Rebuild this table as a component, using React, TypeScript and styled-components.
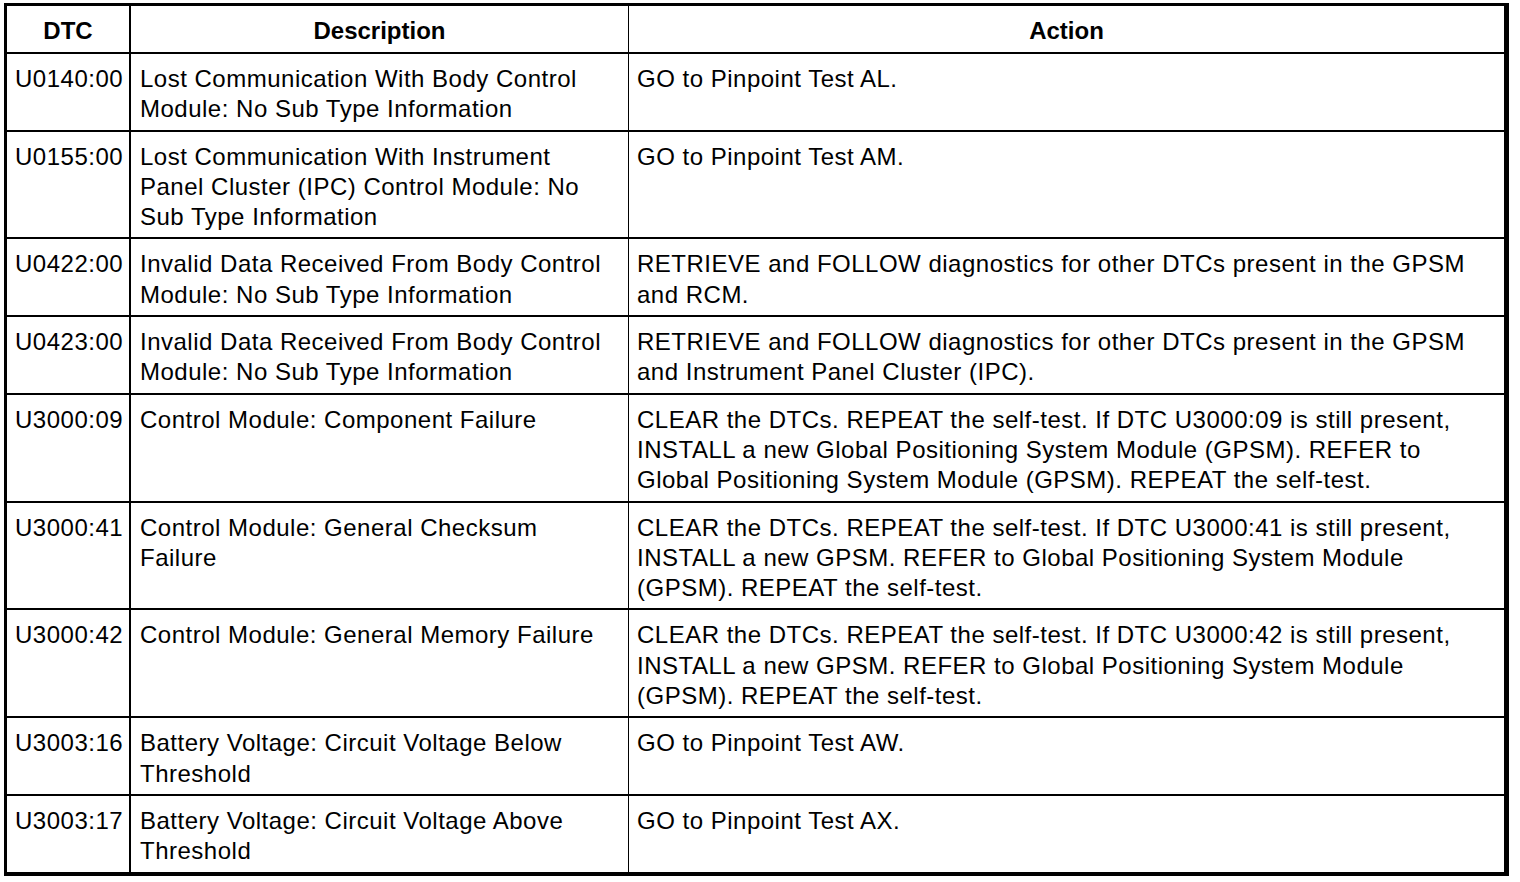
import * as React from "react";
import styled, { createGlobalStyle } from "styled-components";

const GlobalStyle = createGlobalStyle`
  html, body {
    margin: 0;
    padding: 0;
    background: #ffffff;
  }
  body {
    font-family: "Liberation Sans", Arial, sans-serif;
    color: #000000;
  }
`;

const Page = styled.div`
  padding: 3px 0 0 4px;
`;

const Table = styled.div`
  box-sizing: border-box;
  width: 1505px;
  border-style: solid;
  border-color: #000;
  border-width: 3px 5px 4px 3px;
  display: grid;
  grid-template-columns: 124px 498px 875px;
`;

const Row = styled.div<{ $last?: boolean }>`
  display: contents;

  & > div {
    border-bottom: ${(p) => (p.$last ? "none" : "2px solid #000")};
  }
`;

const Cell = styled.div<{ $col: number }>`
  box-sizing: border-box;
  padding: 10px ${(p) => (p.$col === 0 ? 4 : 20)}px 5px ${(p) => (p.$col === 1 ? 9 : 8)}px;
  font-size: 24px;
  line-height: 30.3px;
  letter-spacing: 0.5px;
  border-right: ${(p) =>
    p.$col === 0 ? "2px solid #000" : p.$col === 1 ? "1px solid #000" : "none"};
`;

const HeadCell = styled(Cell)`
  height: 48px;
  padding: 10px 4px 0;
  font-weight: bold;
  letter-spacing: 0;
  text-align: center;
`;

type Entry = {
  dtc: string;
  description: string;
  action: string;
};

const entries: Entry[] = [
  {
    dtc: "U0140:00",
    description: "Lost Communication With Body Control Module: No Sub Type Information",
    action: "GO to Pinpoint Test AL.",
  },
  {
    dtc: "U0155:00",
    description:
      "Lost Communication With Instrument Panel Cluster (IPC) Control Module: No Sub Type Information",
    action: "GO to Pinpoint Test AM.",
  },
  {
    dtc: "U0422:00",
    description: "Invalid Data Received From Body Control Module: No Sub Type Information",
    action: "RETRIEVE and FOLLOW diagnostics for other DTCs present in the GPSM and RCM.",
  },
  {
    dtc: "U0423:00",
    description: "Invalid Data Received From Body Control Module: No Sub Type Information",
    action:
      "RETRIEVE and FOLLOW diagnostics for other DTCs present in the GPSM and Instrument Panel Cluster (IPC).",
  },
  {
    dtc: "U3000:09",
    description: "Control Module: Component Failure",
    action:
      "CLEAR the DTCs. REPEAT the self-test. If DTC U3000:09 is still present, INSTALL a new Global Positioning System Module (GPSM). REFER to Global Positioning System Module (GPSM). REPEAT the self-test.",
  },
  {
    dtc: "U3000:41",
    description: "Control Module: General Checksum Failure",
    action:
      "CLEAR the DTCs. REPEAT the self-test. If DTC U3000:41 is still present, INSTALL a new GPSM. REFER to Global Positioning System Module (GPSM). REPEAT the self-test.",
  },
  {
    dtc: "U3000:42",
    description: "Control Module: General Memory Failure",
    action:
      "CLEAR the DTCs. REPEAT the self-test. If DTC U3000:42 is still present, INSTALL a new GPSM. REFER to Global Positioning System Module (GPSM). REPEAT the self-test.",
  },
  {
    dtc: "U3003:16",
    description: "Battery Voltage: Circuit Voltage Below Threshold",
    action: "GO to Pinpoint Test AW.",
  },
  {
    dtc: "U3003:17",
    description: "Battery Voltage: Circuit Voltage Above Threshold",
    action: "GO to Pinpoint Test AX.",
  },
];

export default function App() {
  return (
    <Page>
      <GlobalStyle />
      <Table>
        <Row>
          <HeadCell $col={0}>DTC</HeadCell>
          <HeadCell $col={1}>Description</HeadCell>
          <HeadCell $col={2}>Action</HeadCell>
        </Row>
        {entries.map((e, i) => (
          <Row key={e.dtc} $last={i === entries.length - 1}>
            <Cell $col={0}>{e.dtc}</Cell>
            <Cell $col={1}>{e.description}</Cell>
            <Cell $col={2}>{e.action}</Cell>
          </Row>
        ))}
      </Table>
    </Page>
  );
}
